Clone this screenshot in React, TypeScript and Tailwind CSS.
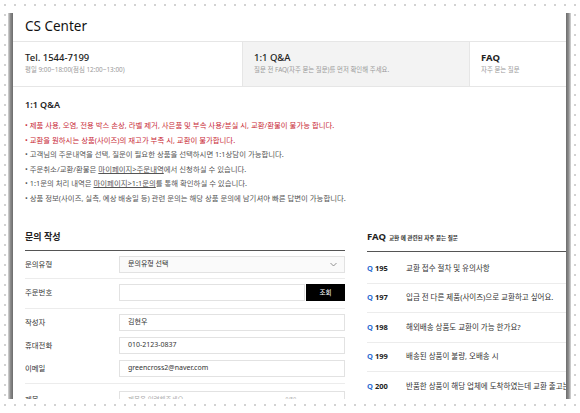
import React from 'react';

const notices = [
    { red: true, text: <>• 제품 사용, 오염, 전용 박스 손상, 라벨 제거, 사은품 및 부속 사용/분실 시, 교환/환불이 불가능 합니다.</> },
    { red: true, text: <>• 교환을 원하시는 상품(사이즈)의 재고가 부족 시, 교환이 불가합니다.</> },
    { red: false, text: <>• 고객님의 주문내역을 선택, 질문이 필요한 상품을 선택하시면 1:1상담이 가능합니다.</> },
    { red: false, text: <>• 주문취소/교환/환불은 <span className="underline">마이페이지&gt;주문내역</span>에서 신청하실 수 있습니다.</> },
    { red: false, text: <>• 1:1문의 처리 내역은 <span className="underline">마이페이지&gt;1:1문의</span>를 통해 확인하실 수 있습니다.</> },
    { red: false, text: <>• 상품 정보(사이즈, 실측, 예상 배송일 등) 관련 문의는 해당 상품 문의에 남기셔야 빠른 답변이 가능합니다.</> },
];

const faqs = [
    { no: 195, title: '교환 접수 절차 및 유의사항' },
    { no: 197, title: '입금 전 다른 제품(사이즈)으로 교환하고 싶어요.' },
    { no: 198, title: '해외배송 상품도 교환이 가능 한가요?' },
    { no: 199, title: '배송된 상품이 불량, 오배송 시' },
    { no: 200, title: '반품한 상품이 해당 업체에 도착하였는데 교환 출고는 언제 되나요?' },
];

const Field: React.FC<{ value: string }> = ({ value }) => (
    <div className="flex h-[17px] flex-1 items-center border border-[#e2e2e2] bg-white pl-[8px] text-[7px] text-[#333]">
        {value}
    </div>
);

const Row: React.FC<{ label: string; children: React.ReactNode }> = ({ label, children }) => (
    <div className="flex items-center">
        <div className="w-[94px] text-[7.4px] text-[#333]">{label}</div>
        <div className="flex flex-1 gap-[1px]">{children}</div>
    </div>
);

const App: React.FC = () => {
    return (
        <div className="h-[413px] w-[580px] overflow-hidden bg-white bg-[radial-gradient(circle,#d2d2d2_0.9px,transparent_1.3px)] bg-[length:10px_10px] pl-[8px] pt-[13px] font-['Noto_Sans','Noto_Sans_CJK_KR',sans-serif]">
            <div className="flex h-[386px] w-[563px]">
                <div className="w-[5px] bg-linear-to-r from-[#d8d8d8] via-[#8c8c8c] to-[#6c6c6c]" />
                <div className="w-[553px] overflow-hidden bg-white">
                    <div className="flex h-[29px] items-center border-b border-[#e6e6e6] pl-[12px] text-[13.5px] leading-none text-[#111]">
                        CS Center
                    </div>

                    <div className="flex h-[45px] border-b border-[#e6e6e6]">
                        <div className="w-[229px] pl-[12px] pt-[10px]">
                            <div className="text-[9.5px] font-medium leading-[12px] text-[#222]">Tel. 1544-7199</div>
                            <div className="mt-[2px] text-[6.4px] leading-[8px] text-[#9a9a9a]">평일 9:00~18:00(점심 12:00~13:00)</div>
                        </div>
                        <div className="w-[228px] border-x border-[#e6e6e6] bg-[#f3f3f3] pl-[11px] pt-[10px]">
                            <div className="text-[9.5px] font-medium leading-[12px] text-[#222]">1:1 Q&amp;A</div>
                            <div className="mt-[2px] text-[6.4px] leading-[8px] text-[#9a9a9a]">질문 전 FAQ(자주 묻는 질문)를 먼저 확인해 주세요.</div>
                        </div>
                        <div className="flex-1 pl-[11px] pt-[10px]">
                            <div className="text-[9.5px] font-bold leading-[12px] text-[#222]">FAQ</div>
                            <div className="mt-[2px] text-[6.4px] leading-[8px] text-[#9a9a9a]">자주 묻는 질문</div>
                        </div>
                    </div>

                    <div className="pl-[12px]">
                        <h2 className="pt-[10px] text-[9px] font-semibold leading-[16px] text-[#222]">1:1 Q&amp;A</h2>
                        <ul className="mt-[5px] text-[7.4px] leading-[14.5px]">
                            {notices.map((n, i) => (
                                <li key={i} className={n.red ? 'text-[#c92b38]' : 'text-[#555]'}>
                                    {n.text}
                                </li>
                            ))}
                        </ul>

                        <div className="mt-[25px] flex gap-[22px]">
                            <div className="w-[320px] flex-none">
                                <div className="border-b border-[#555] pb-[6px] text-[9px] font-bold leading-[14px] text-[#222]">문의 작성</div>

                                <div className="border-b border-[#ececec] py-[5px]">
                                    <Row label="문의유형">
                                        <div className="flex h-[17px] flex-1 items-center justify-between border border-[#e2e2e2] bg-[#fafafa] pl-[8px] pr-[7px] text-[7px] text-[#333]">
                                            문의유형 선택
                                            <svg width="7" height="5" viewBox="0 0 7 5" fill="none">
                                                <path d="M0.5 1 L3.5 4 L6.5 1" stroke="#777" strokeWidth="0.8" />
                                            </svg>
                                        </div>
                                    </Row>
                                </div>

                                <div className="border-b border-[#ececec] pb-[7px] pt-[5px]">
                                    <Row label="주문번호">
                                        <Field value="" />
                                        <button className="h-[17px] w-[39px] bg-black text-[6.5px] text-white">조회</button>
                                    </Row>
                                </div>

                                <div className="flex flex-col gap-[6px] border-b border-[#ececec] pb-[6px] pt-[5px]">
                                    <Row label="작성자">
                                        <Field value="김현우" />
                                    </Row>
                                    <Row label="휴대전화">
                                        <Field value="010-2123-0837" />
                                    </Row>
                                    <Row label="이메일">
                                        <Field value="greencross2@naver.com" />
                                    </Row>
                                </div>

                                <div className="pt-[7px]">
                                    <Row label="제목">
                                        <div className="flex h-[17px] flex-1 items-center justify-between border border-[#e2e2e2] bg-white pl-[8px] pr-[48px] text-[6.5px] text-[#aaa]">
                                            <span>제목을 입력해주세요</span>
                                            <span className="text-[5px]">0/50</span>
                                        </div>
                                    </Row>
                                </div>
                            </div>

                            <div className="w-[230px] flex-none">
                                <div className="flex items-baseline gap-[3px] border-b border-[#555] pb-[6px] leading-[14px]">
                                    <span className="text-[9.5px] font-bold text-[#222]">FAQ</span>
                                    <span className="text-[5.6px] font-bold text-[#333]">교환 에 관련된 자주 묻는 질문</span>
                                </div>
                                <ul className="mt-[2px]">
                                    {faqs.map(f => (
                                        <li key={f.no} className="flex h-[29.5px] items-center border-b border-[#ececec] whitespace-nowrap">
                                            <span className="w-[39px] flex-none text-[7.5px] font-bold text-[#222]">
                                                <span className="text-[#2f6fd3]">Q</span> {f.no}
                                            </span>
                                            <span className="text-[7.5px] text-[#333]">{f.title}</span>
                                        </li>
                                    ))}
                                </ul>
                            </div>
                        </div>
                    </div>
                </div>
                <div className="w-[5px] bg-linear-to-r from-[#6c6c6c] via-[#8c8c8c] to-[#d8d8d8]" />
            </div>
        </div>
    );
};

export default App;
